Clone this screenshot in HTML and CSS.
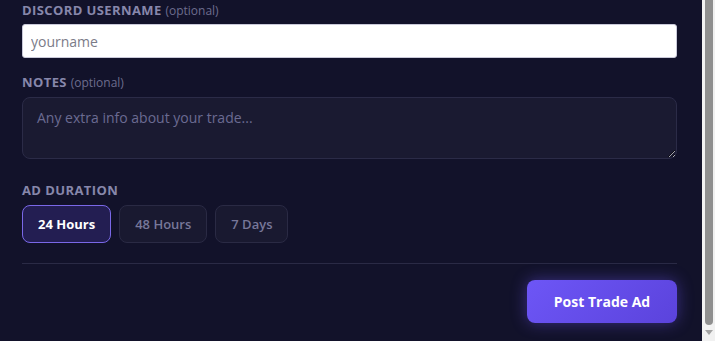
FILE: index.html
```html
<!DOCTYPE html>
<html lang="en">
<head>
    <meta charset="UTF-8">
    <meta name="viewport" content="width=device-width, initial-scale=1.0">
    <title>Post Trade Ad</title>
    <link rel="stylesheet" href="styles.css">
</head>
<body>
    <div class="window">
        <div class="page">
            <form class="trade-form" id="tradeForm">
                <!-- Discord -->
                <div class="field">
                    <label for="discord">Discord Username <span class="opt">(optional)</span></label>
                    <input type="text" id="discord" placeholder="yourname">
                </div>

                <!-- Notes -->
                <div class="field field-notes">
                    <label for="notes">Notes <span class="opt">(optional)</span></label>
                    <textarea id="notes" placeholder="Any extra info about your trade..."></textarea>
                </div>

                <!-- Duration -->
                <div class="field">
                    <label>Ad Duration</label>
                    <div class="durations">
                        <button type="button" class="dur active">24 Hours</button>
                        <button type="button" class="dur">48 Hours</button>
                        <button type="button" class="dur">7 Days</button>
                    </div>
                </div>

                <div class="form-footer">
                    <button type="submit" class="post-btn">Post Trade Ad</button>
                </div>
            </form>
        </div>
        <div class="scrollbar">
            <div class="thumb"></div>
            <div class="arrow"></div>
        </div>
    </div>
</body>
</html>
```

FILE: styles.css
```css
* {
    margin: 0;
    padding: 0;
    box-sizing: border-box;
    font-family: 'Open Sans', 'Noto Sans', sans-serif;
}
html, body {
    height: 100%;
    overflow: hidden;
}
body {
    background: #12122a;
}
.window {
    display: flex;
    height: 100%;
}
.page {
    flex: 1;
    padding: 0 25px 0 22px;
}
.field {
    margin-bottom: 14px;
}
.field-notes {
    margin-bottom: 21px;
}
label {
    display: block;
    height: 20px;
    line-height: 20px;
    margin-bottom: 4px;
    font-size: 13px;
    font-weight: 700;
    text-transform: uppercase;
    letter-spacing: 0.4px;
    color: #8787ab;
}
.field-notes label {
    margin-bottom: 5px;
}
.opt {
    text-transform: none;
    font-weight: 400;
    font-size: 12px;
    letter-spacing: 0;
    color: #6d6d8e;
}
input {
    display: block;
    width: 100%;
    height: 34px;
    padding: 0 8px;
    background: #fff;
    border: 1px solid #c9c9d9;
    border-radius: 3px;
    font-size: 14px;
    color: #222;
    outline: none;
}
input::placeholder {
    color: #7b7b88;
}
textarea {
    display: block;
    width: 100%;
    height: 62px;
    padding: 10px 14px;
    background: #1a1a31;
    border: 1px solid #2b2b47;
    border-radius: 8px;
    font-size: 14px;
    color: #ccc;
    resize: vertical;
    outline: none;
}
textarea::placeholder {
    color: #6b6b91;
}
.durations {
    display: flex;
    gap: 8px;
    margin-top: 5px;
}
.dur {
    height: 38px;
    padding: 0 15px;
    background: #191930;
    border: 1px solid #2a2a44;
    border-radius: 8px;
    font-size: 13px;
    font-weight: 600;
    color: #777799;
    cursor: pointer;
}
.dur.active {
    background: #231e52;
    border-color: #7a68e8;
    color: #fff;
    font-weight: 700;
}
.form-footer {
    margin-top: 20px;
    padding-top: 16px;
    border-top: 1px solid #2a2a45;
    display: flex;
    justify-content: flex-end;
}
.post-btn {
    width: 150px;
    height: 43px;
    background: linear-gradient(135deg, #6d56f6, #5b43dc);
    border: none;
    border-radius: 8px;
    font-size: 14px;
    font-weight: 700;
    color: #fff;
    cursor: pointer;
    box-shadow: 0 0 16px rgba(108, 85, 245, 0.45);
}
.scrollbar {
    width: 13px;
    background: #f1f1f1;
    display: flex;
    flex-direction: column;
    align-items: center;
    padding: 0 1px 0 2px;
}
.thumb {
    flex: 1;
    width: 8px;
    background: #8f8f8f;
    border-radius: 0 0 4px 4px;
}
.arrow {
    width: 0;
    height: 0;
    margin: 5px 0 6px;
    border-left: 4px solid transparent;
    border-right: 4px solid transparent;
    border-top: 5px solid #a3a3a3;
}
```
